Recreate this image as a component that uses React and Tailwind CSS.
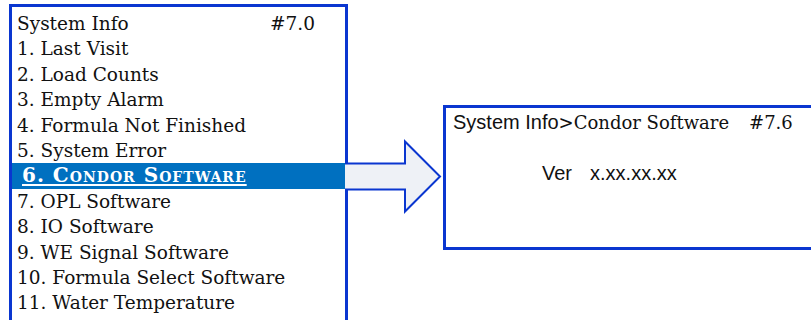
export default function App() {
  const items = [
    '1. Last Visit',
    '2. Load Counts',
    '3. Empty Alarm',
    '4. Formula Not Finished',
    '5. System Error',
    null,
    '7. OPL Software',
    '8. IO Software',
    '9. WE Signal Software',
    '10. Formula Select Software',
    '11. Water Temperature',
  ]

  return (
    <div className="relative w-[811px] h-[320px] overflow-hidden bg-white flex items-start">
      {/* menu screen */}
      <div className="ml-[9px] mt-[4px] w-[339px] shrink-0 border-[3px] border-[#0a36d0] pt-[4px] pb-[20px] font-['DejaVu_Serif',serif] text-[18.5px] leading-[25.4px] text-[#111]">
        <div className="flex pl-[5px]">
          <span>System Info</span>
          <span className="ml-auto mr-[30px]">#7.0</span>
        </div>
        {items.map((item, i) =>
          item ? (
            <div key={i} className="pl-[5px] whitespace-nowrap">{item}</div>
          ) : (
            <div key={i} className="h-[25.4px] bg-[#0070c0] pl-[10px] flex items-center">
              <span className="text-white font-bold text-[20px] tracking-[1px] underline underline-offset-2 [font-variant:small-caps] whitespace-nowrap">
                6. Condor Software
              </span>
            </div>
          )
        )}
      </div>

      {/* detail screen */}
      <div className="ml-[95px] mt-[105px] w-[400px] h-[145px] shrink-0 border-[3px] border-[#0a36d0] pl-[7px] pt-[1px] text-[#111]">
        <div className="flex items-baseline whitespace-nowrap leading-[26px]">
          <span className="font-['Liberation_Sans',sans-serif] text-[20px]">System Info</span>
          <span className="font-['DejaVu_Serif',serif] text-[18px]">&gt;Condor Software</span>
          <span className="ml-[20px] font-['DejaVu_Serif',serif] text-[18px]">#7.6</span>
        </div>
        <div className="mt-[24px] ml-[89px] flex items-baseline font-['Liberation_Sans',sans-serif] text-[20px] leading-[26px]">
          <span>Ver</span>
          <span className="ml-[18px]">x.xx.xx.xx</span>
        </div>
      </div>

      {/* arrow */}
      <svg className="absolute left-[344px] top-[138px]" width="100" height="78" viewBox="0 0 100 78">
        <path
          d="M1 25.5 H61 V3.5 L96 38.5 L61 73.5 V51.5 H1"
          fill="#eef1f6"
          stroke="#0a36d0"
          strokeWidth="2"
          strokeLinejoin="miter"
        />
      </svg>
    </div>
  )
}
